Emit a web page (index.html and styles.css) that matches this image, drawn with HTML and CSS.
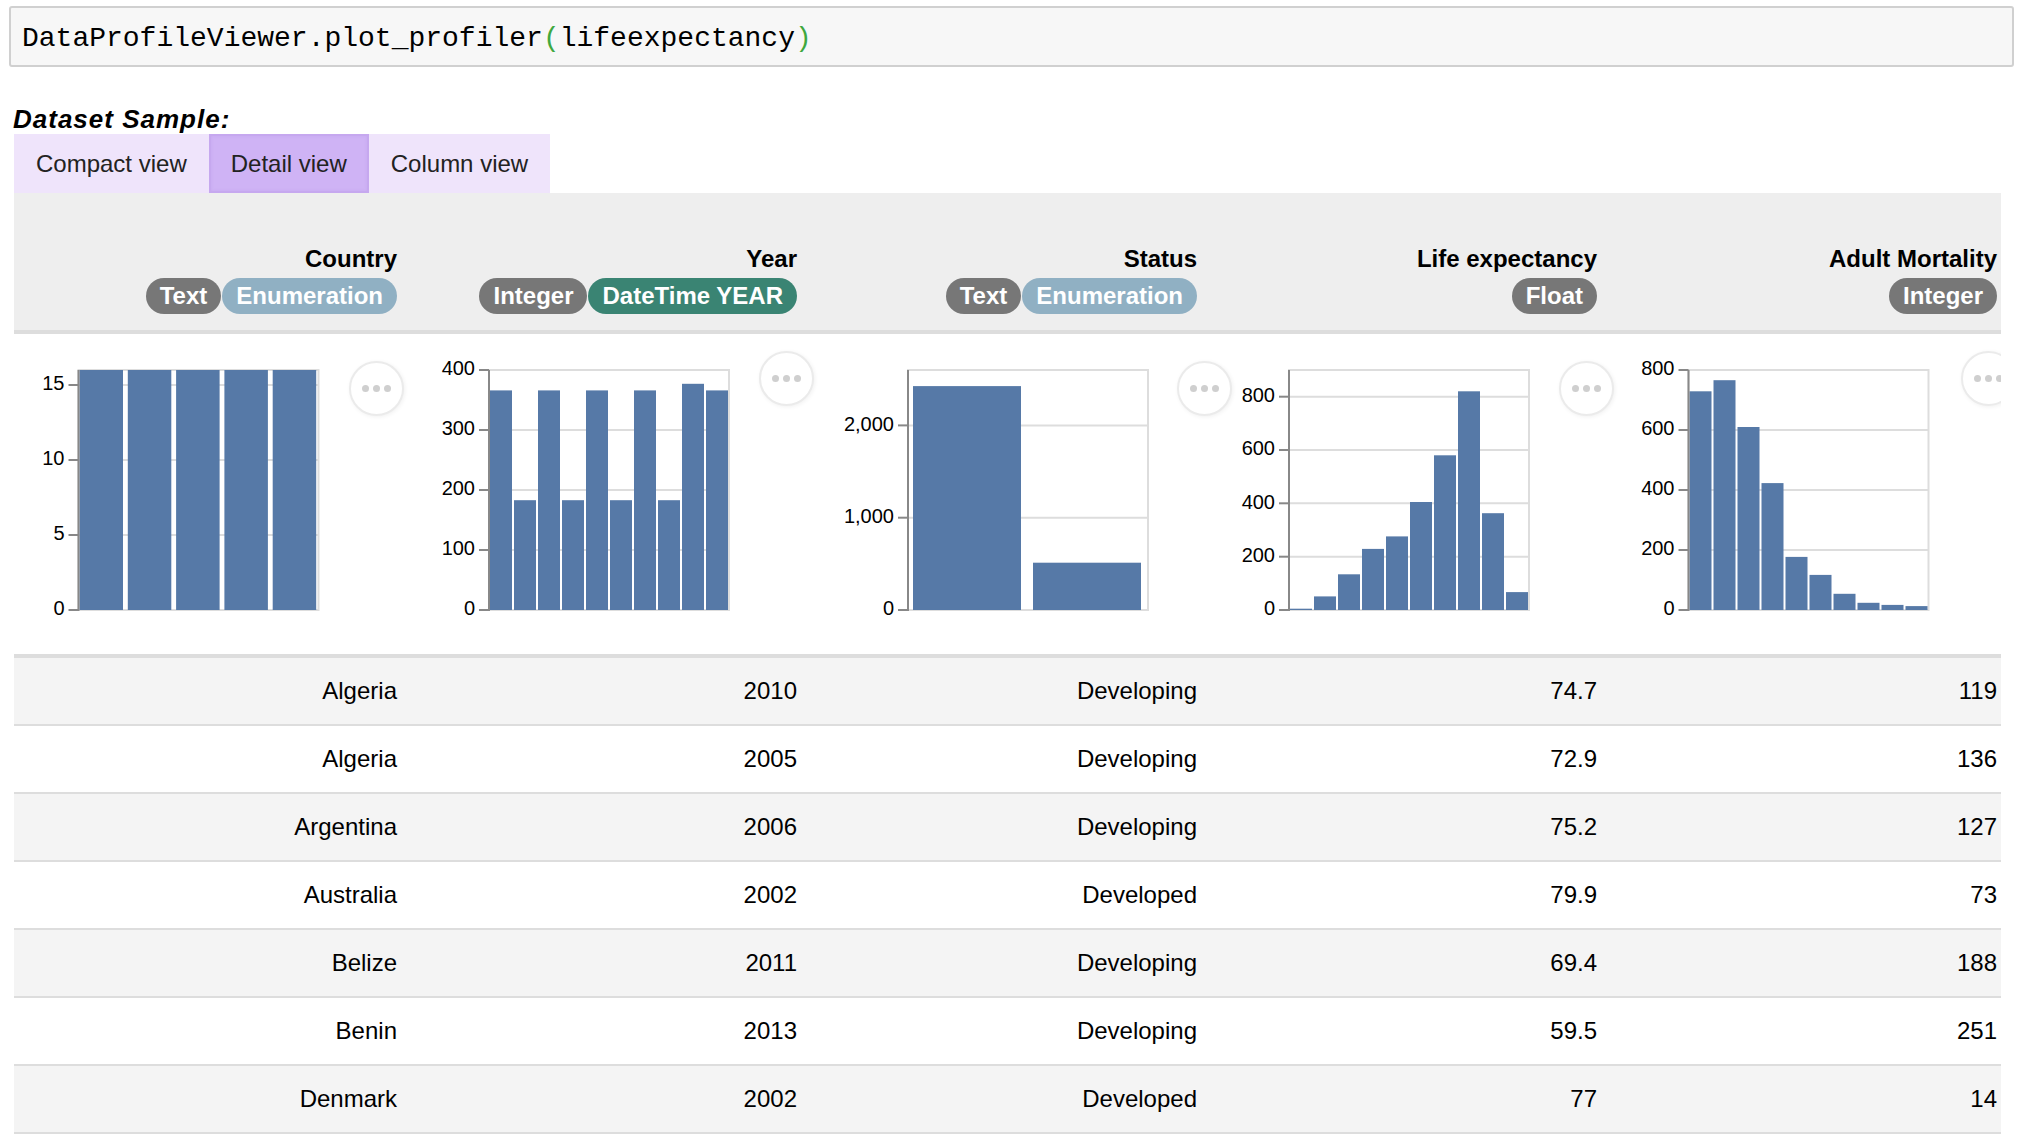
FILE: index.html
```
<!DOCTYPE html>
<html>
<head>
<meta charset="utf-8">
<title>Data Profile Viewer</title>
<link rel="stylesheet" href="styles.css">
</head>
<body>
<div class="code-cell"><span>DataProfileViewer.plot_profiler</span><span class="paren">(</span><span>lifeexpectancy</span><span class="paren">)</span></div>

<div class="output">
  <div class="title">Dataset Sample:</div>
  <div class="tabs">
    <div class="tab">Compact view</div>
    <div class="tab active">Detail view</div>
    <div class="tab">Column view</div>
  </div>

  <div class="scroller">
    <div class="row head">
      <div class="hcell"><div class="name">Country</div><div class="badges"><span class="badge gray">Text</span><span class="badge enum">Enumeration</span></div></div>
      <div class="hcell"><div class="name">Year</div><div class="badges"><span class="badge gray">Integer</span><span class="badge date">DateTime YEAR</span></div></div>
      <div class="hcell"><div class="name">Status</div><div class="badges"><span class="badge gray">Text</span><span class="badge enum">Enumeration</span></div></div>
      <div class="hcell"><div class="name">Life expectancy</div><div class="badges"><span class="badge gray">Float</span></div></div>
      <div class="hcell"><div class="name">Adult Mortality</div><div class="badges"><span class="badge gray">Integer</span></div></div>
    </div>

    <div class="row charts">
      <div class="ccell">
        <svg class="chart" width="400" height="320" viewBox="0 0 400 320">
          <g class="grid">
            <line x1="64.5" x2="304.5" y1="51" y2="51"/><line x1="64.5" x2="304.5" y1="126" y2="126"/><line x1="64.5" x2="304.5" y1="201" y2="201"/><line x1="64.5" x2="304.5" y1="276" y2="276"/>
          </g>
          <rect class="frame" x="64.5" y="36" width="240" height="240"/>
          <g class="bars">
            <rect x="65.5" y="36" width="43.5" height="240"/><rect x="113.8" y="36" width="43.5" height="240"/><rect x="162.1" y="36" width="43.5" height="240"/><rect x="210.4" y="36" width="43.5" height="240"/><rect x="258.7" y="36" width="43.5" height="240"/>
          </g>
          <g class="axis">
            <line x1="64.5" x2="64.5" y1="36" y2="277"/>
            <line x1="54.5" x2="64.5" y1="51" y2="51"/><line x1="54.5" x2="64.5" y1="126" y2="126"/><line x1="54.5" x2="64.5" y1="201" y2="201"/><line x1="54.5" x2="64.5" y1="276" y2="276"/>
          </g>
          <g class="labels">
            <text x="50.5" y="51">15</text><text x="50.5" y="126">10</text><text x="50.5" y="201">5</text><text x="50.5" y="276">0</text>
          </g>
        </svg>
        <div class="menu m1"><i></i><i></i><i></i></div>
      </div>

      <div class="ccell">
        <svg class="chart" width="400" height="320" viewBox="0 0 400 320">
          <g class="grid">
            <line x1="75" x2="315" y1="96" y2="96"/><line x1="75" x2="315" y1="156" y2="156"/><line x1="75" x2="315" y1="216" y2="216"/><line x1="75" x2="315" y1="276" y2="276"/>
          </g>
          <rect class="frame" x="75" y="36" width="240" height="240"/>
          <g class="bars">
            <rect x="76" y="56.4" width="22" height="219.6"/>
            <rect x="100" y="166.2" width="22" height="109.8"/>
            <rect x="124" y="56.4" width="22" height="219.6"/>
            <rect x="148" y="166.2" width="22" height="109.8"/>
            <rect x="172" y="56.4" width="22" height="219.6"/>
            <rect x="196" y="166.2" width="22" height="109.8"/>
            <rect x="220" y="56.4" width="22" height="219.6"/>
            <rect x="244" y="166.2" width="22" height="109.8"/>
            <rect x="268" y="49.8" width="22" height="226.2"/>
            <rect x="292" y="56.4" width="22" height="219.6"/>
          </g>
          <g class="axis">
            <line x1="75" x2="75" y1="36" y2="277"/>
            <line x1="65" x2="75" y1="36" y2="36"/><line x1="65" x2="75" y1="96" y2="96"/><line x1="65" x2="75" y1="156" y2="156"/><line x1="65" x2="75" y1="216" y2="216"/><line x1="65" x2="75" y1="276" y2="276"/>
          </g>
          <g class="labels">
            <text x="61" y="36">400</text><text x="61" y="96">300</text><text x="61" y="156">200</text><text x="61" y="216">100</text><text x="61" y="276">0</text>
          </g>
        </svg>
        <div class="menu m2"><i></i><i></i><i></i></div>
      </div>

      <div class="ccell">
        <svg class="chart" width="400" height="320" viewBox="0 0 400 320">
          <g class="grid">
            <line x1="94" x2="334" y1="91.4" y2="91.4"/><line x1="94" x2="334" y1="183.7" y2="183.7"/><line x1="94" x2="334" y1="276" y2="276"/>
          </g>
          <rect class="frame" x="94" y="36" width="240" height="240"/>
          <g class="bars">
            <rect x="99" y="52.1" width="108" height="223.9"/>
            <rect x="219" y="228.7" width="108" height="47.3"/>
          </g>
          <g class="axis">
            <line x1="94" x2="94" y1="36" y2="277"/>
            <line x1="84" x2="94" y1="91.4" y2="91.4"/><line x1="84" x2="94" y1="183.7" y2="183.7"/><line x1="84" x2="94" y1="276" y2="276"/>
          </g>
          <g class="labels">
            <text x="80" y="91.4">2,000</text><text x="80" y="183.7">1,000</text><text x="80" y="276">0</text>
          </g>
        </svg>
        <div class="menu m3"><i></i><i></i><i></i></div>
      </div>

      <div class="ccell">
        <svg class="chart" width="400" height="320" viewBox="0 0 400 320">
          <g class="grid">
            <line x1="75" x2="315" y1="62.7" y2="62.7"/><line x1="75" x2="315" y1="116" y2="116"/><line x1="75" x2="315" y1="169.3" y2="169.3"/><line x1="75" x2="315" y1="222.7" y2="222.7"/><line x1="75" x2="315" y1="276" y2="276"/>
          </g>
          <rect class="frame" x="75" y="36" width="240" height="240"/>
          <g class="bars">
            <rect x="76" y="274.7" width="22" height="1.3"/>
            <rect x="100" y="262.4" width="22" height="13.6"/>
            <rect x="124" y="240.3" width="22" height="35.7"/>
            <rect x="148" y="214.9" width="22" height="61.1"/>
            <rect x="172" y="202.4" width="22" height="73.6"/>
            <rect x="196" y="168" width="22" height="108"/>
            <rect x="220" y="121.3" width="22" height="154.7"/>
            <rect x="244" y="57.3" width="22" height="218.7"/>
            <rect x="268" y="179.2" width="22" height="96.8"/>
            <rect x="292" y="258.1" width="22" height="17.9"/>
          </g>
          <g class="axis">
            <line x1="75" x2="75" y1="36" y2="277"/>
            <line x1="65" x2="75" y1="62.7" y2="62.7"/><line x1="65" x2="75" y1="116" y2="116"/><line x1="65" x2="75" y1="169.3" y2="169.3"/><line x1="65" x2="75" y1="222.7" y2="222.7"/><line x1="65" x2="75" y1="276" y2="276"/>
          </g>
          <g class="labels">
            <text x="61" y="62.7">800</text><text x="61" y="116">600</text><text x="61" y="169.3">400</text><text x="61" y="222.7">200</text><text x="61" y="276">0</text>
          </g>
        </svg>
        <div class="menu m4"><i></i><i></i><i></i></div>
      </div>

      <div class="ccell">
        <svg class="chart" width="400" height="320" viewBox="0 0 400 320">
          <g class="grid">
            <line x1="74.5" x2="314.5" y1="96" y2="96"/><line x1="74.5" x2="314.5" y1="156" y2="156"/><line x1="74.5" x2="314.5" y1="216" y2="216"/><line x1="74.5" x2="314.5" y1="276" y2="276"/>
          </g>
          <rect class="frame" x="74.5" y="36" width="240" height="240"/>
          <g class="bars">
            <rect x="75.5" y="57.3" width="22" height="218.7"/>
            <rect x="99.5" y="46.2" width="22" height="229.8"/>
            <rect x="123.5" y="93" width="22" height="183"/>
            <rect x="147.5" y="149.1" width="22" height="126.9"/>
            <rect x="171.5" y="222.9" width="22" height="53.1"/>
            <rect x="195.5" y="240.9" width="22" height="35.1"/>
            <rect x="219.5" y="259.8" width="22" height="16.2"/>
            <rect x="243.5" y="268.8" width="22" height="7.2"/>
            <rect x="267.5" y="270.9" width="22" height="5.1"/>
            <rect x="291.5" y="272.1" width="22" height="3.9"/>
          </g>
          <g class="axis">
            <line x1="74.5" x2="74.5" y1="36" y2="277"/>
            <line x1="64.5" x2="74.5" y1="36" y2="36"/><line x1="64.5" x2="74.5" y1="96" y2="96"/><line x1="64.5" x2="74.5" y1="156" y2="156"/><line x1="64.5" x2="74.5" y1="216" y2="216"/><line x1="64.5" x2="74.5" y1="276" y2="276"/>
          </g>
          <g class="labels">
            <text x="60.5" y="36">800</text><text x="60.5" y="96">600</text><text x="60.5" y="156">400</text><text x="60.5" y="216">200</text><text x="60.5" y="276">0</text>
          </g>
        </svg>
        <div class="menu m5"><i></i><i></i><i></i></div>
      </div>
    </div>

    <div class="row data alt"><div class="cell">Algeria</div><div class="cell">2010</div><div class="cell">Developing</div><div class="cell">74.7</div><div class="cell">119</div></div>
    <div class="row data"><div class="cell">Algeria</div><div class="cell">2005</div><div class="cell">Developing</div><div class="cell">72.9</div><div class="cell">136</div></div>
    <div class="row data alt"><div class="cell">Argentina</div><div class="cell">2006</div><div class="cell">Developing</div><div class="cell">75.2</div><div class="cell">127</div></div>
    <div class="row data"><div class="cell">Australia</div><div class="cell">2002</div><div class="cell">Developed</div><div class="cell">79.9</div><div class="cell">73</div></div>
    <div class="row data alt"><div class="cell">Belize</div><div class="cell">2011</div><div class="cell">Developing</div><div class="cell">69.4</div><div class="cell">188</div></div>
    <div class="row data"><div class="cell">Benin</div><div class="cell">2013</div><div class="cell">Developing</div><div class="cell">59.5</div><div class="cell">251</div></div>
    <div class="row data alt"><div class="cell">Denmark</div><div class="cell">2002</div><div class="cell">Developed</div><div class="cell">77</div><div class="cell">14</div></div>
  </div>
</div>
</body>
</html>
```

FILE: styles.css
```
html, body {
  background: #fff;
}
body {
  margin: 0;
  padding-top: 6px;
  font-family: "Liberation Sans", Arial, sans-serif;
  color: #000;
}

.code-cell {
  margin: 0 8px 0 9px;
  height: 61px;
  box-sizing: border-box;
  border: 2px solid #d0d0d0;
  border-radius: 3px;
  background: #f7f7f7;
  display: flex;
  align-items: center;
  padding: 4px 0 0 11px;
  font-family: "Liberation Mono", "DejaVu Sans Mono", monospace;
  font-size: 28px;
  color: #000;
  white-space: pre;
}
.paren {
  color: #3fa83f;
}

.output {
  margin-top: 37px;
  padding-left: 14px;
}

.title {
  height: 30px;
  line-height: 30px;
  font-size: 26px;
  font-weight: bold;
  font-style: italic;
  letter-spacing: 1px;
  margin-left: -1px;
}

.tabs {
  display: flex;
  height: 59px;
}
.tab {
  padding: 0 22px;
  line-height: 59px;
  font-size: 24px;
  background: #efe4fb;
  color: #222;
}
.tab.active {
  background: #cfb3f5;
  box-shadow: inset 0 0 0 2px #c6a8ef, inset 0 0 4px rgba(120, 70, 190, 0.25);
}

.scroller {
  width: 1987px;
  overflow: hidden;
}

.row {
  display: grid;
  grid-template-columns: repeat(5, 400px);
  width: 2000px;
}

.head {
  height: 137px;
  background: #eeeeee;
  border-bottom: 4px solid #dddddd;
}
.hcell {
  display: flex;
  flex-direction: column;
  align-items: flex-end;
  justify-content: flex-end;
  padding: 0 17px 16px 0;
}
.name {
  font-weight: bold;
  font-size: 24px;
  line-height: 28px;
}
.badges {
  display: flex;
  gap: 1px;
  margin-top: 5px;
}
.badge {
  height: 36px;
  line-height: 36px;
  padding: 0 14px;
  border-radius: 18px;
  color: #fff;
  font-weight: bold;
  font-size: 24px;
  white-space: nowrap;
}
.badge.gray { background: #777777; }
.badge.enum { background: #90b0c3; }
.badge.date { background: #3a8473; }

.charts {
  height: 320px;
  border-bottom: 4px solid #dddddd;
}
.ccell {
  position: relative;
}
.chart {
  display: block;
  overflow: visible;
}
.chart .grid line {
  stroke: #dddddd;
  stroke-width: 2;
}
.chart .frame {
  fill: none;
  stroke: #dddddd;
  stroke-width: 2;
}
.chart .bars rect {
  fill: #5679a7;
}
.chart .axis line {
  stroke: #888888;
  stroke-width: 2;
}
.chart .labels text {
  font-family: "Liberation Sans", Arial, sans-serif;
  font-size: 20px;
  fill: #000;
  text-anchor: end;
  dominant-baseline: middle;
}

.menu {
  position: absolute;
  width: 55px;
  height: 55px;
  box-sizing: border-box;
  border: 2px solid #ebebeb;
  border-radius: 50%;
  background: #fff;
  box-shadow: 1px 1px 4px rgba(0, 0, 0, 0.06);
  display: flex;
  align-items: center;
  justify-content: center;
  gap: 4px;
}
.menu i {
  width: 7px;
  height: 7px;
  border-radius: 50%;
  background: #cfcfcf;
}
.m1 { left: 334.5px; top: 26.5px; }
.m2 { left: 344.5px; top: 16.5px; }
.m3 { left: 362.5px; top: 26.5px; }
.m4 { left: 344.5px; top: 26.5px; }
.m5 { left: 346.5px; top: 16.5px; }

.data {
  height: 66px;
  border-bottom: 2px solid #dddddd;
  background: #fff;
}
.data.alt {
  background: #f4f4f4;
}
.cell {
  text-align: right;
  padding-right: 17px;
  line-height: 66px;
  font-size: 24px;
  white-space: nowrap;
}
```
